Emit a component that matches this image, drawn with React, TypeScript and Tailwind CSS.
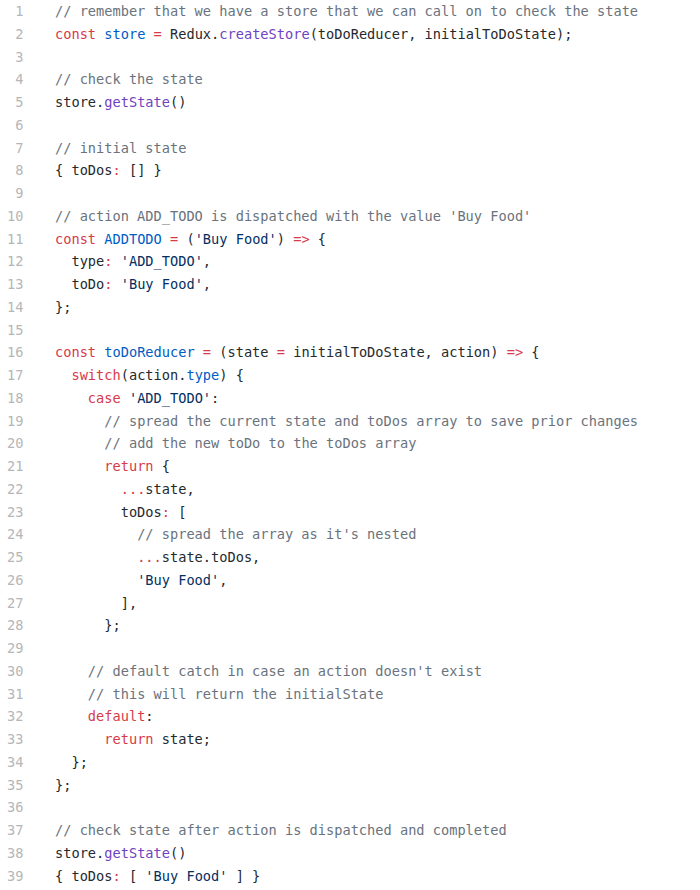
import React from "react";

type Tok = [string, string];

const C = "text-[#6a737d]";
const K = "text-[#d73a49]";
const B = "text-[#005cc5]";
const P = "text-[#6f42c1]";
const S = "text-[#032f62]";
const T = "text-[#24292e]";

const lines: Tok[][] = [
  [[C, "// remember that we have a store that we can call on to check the state"]],
  [[K, "const"], [T, " "], [B, "store"], [T, " "], [K, "="], [T, " Redux."], [P, "createStore"], [T, "(toDoReducer, initialToDoState);"]],
  [],
  [[C, "// check the state"]],
  [[T, "store."], [P, "getState"], [T, "()"]],
  [],
  [[C, "// initial state"]],
  [[T, "{ toDos"], [K, ":"], [T, " [] }"]],
  [],
  [[C, "// action ADD_TODO is dispatched with the value 'Buy Food'"]],
  [[K, "const"], [T, " "], [B, "ADDTODO"], [T, " "], [K, "="], [T, " ("], [S, "'Buy Food'"], [T, ") "], [K, "=>"], [T, " {"]],
  [[T, "  type"], [K, ":"], [T, " "], [S, "'ADD_TODO'"], [T, ","]],
  [[T, "  toDo"], [K, ":"], [T, " "], [S, "'Buy Food'"], [T, ","]],
  [[T, "};"]],
  [],
  [[K, "const"], [T, " "], [B, "toDoReducer"], [T, " "], [K, "="], [T, " (state "], [K, "="], [T, " initialToDoState, action) "], [K, "=>"], [T, " {"]],
  [[T, "  "], [K, "switch"], [T, "(action."], [B, "type"], [T, ") {"]],
  [[T, "    "], [K, "case"], [T, " "], [S, "'ADD_TODO'"], [T, ":"]],
  [[T, "      "], [C, "// spread the current state and toDos array to save prior changes"]],
  [[T, "      "], [C, "// add the new toDo to the toDos array"]],
  [[T, "      "], [K, "return"], [T, " {"]],
  [[T, "        "], [K, "..."], [T, "state,"]],
  [[T, "        toDos"], [K, ":"], [T, " ["]],
  [[T, "          "], [C, "// spread the array as it's nested"]],
  [[T, "          "], [K, "..."], [T, "state.toDos,"]],
  [[T, "          "], [S, "'Buy Food'"], [T, ","]],
  [[T, "        ],"]],
  [[T, "      };"]],
  [],
  [[T, "    "], [C, "// default catch in case an action doesn't exist"]],
  [[T, "    "], [C, "// this will return the initialState"]],
  [[T, "    "], [K, "default"], [T, ":"]],
  [[T, "      "], [K, "return"], [T, " state;"]],
  [[T, "  };"]],
  [[T, "};"]],
  [],
  [[C, "// check state after action is dispatched and completed"]],
  [[T, "store."], [P, "getState"], [T, "()"]],
  [[T, "{ toDos"], [K, ":"], [T, " [ "], [S, "'Buy Food'"], [T, " ] }"]],
];

export default function App() {
  return (
    <div
      className="w-[700px] h-[890px] bg-white overflow-hidden text-[13.65px] leading-[22.75px]"
      style={{ fontFamily: '"DejaVu Sans Mono", "Liberation Mono", monospace' }}
    >
      {lines.map((toks, i) => (
        <div key={i} className="flex h-[22.75px]">
          <div className="w-[23.5px] shrink-0 text-right text-[#b5b6b8]">{i + 1}</div>
          <div className="pl-[31.5px] whitespace-pre text-[#24292e]">
            {toks.map(([cls, txt], j) => (
              <span key={j} className={cls}>
                {txt}
              </span>
            ))}
          </div>
        </div>
      ))}
    </div>
  );
}
